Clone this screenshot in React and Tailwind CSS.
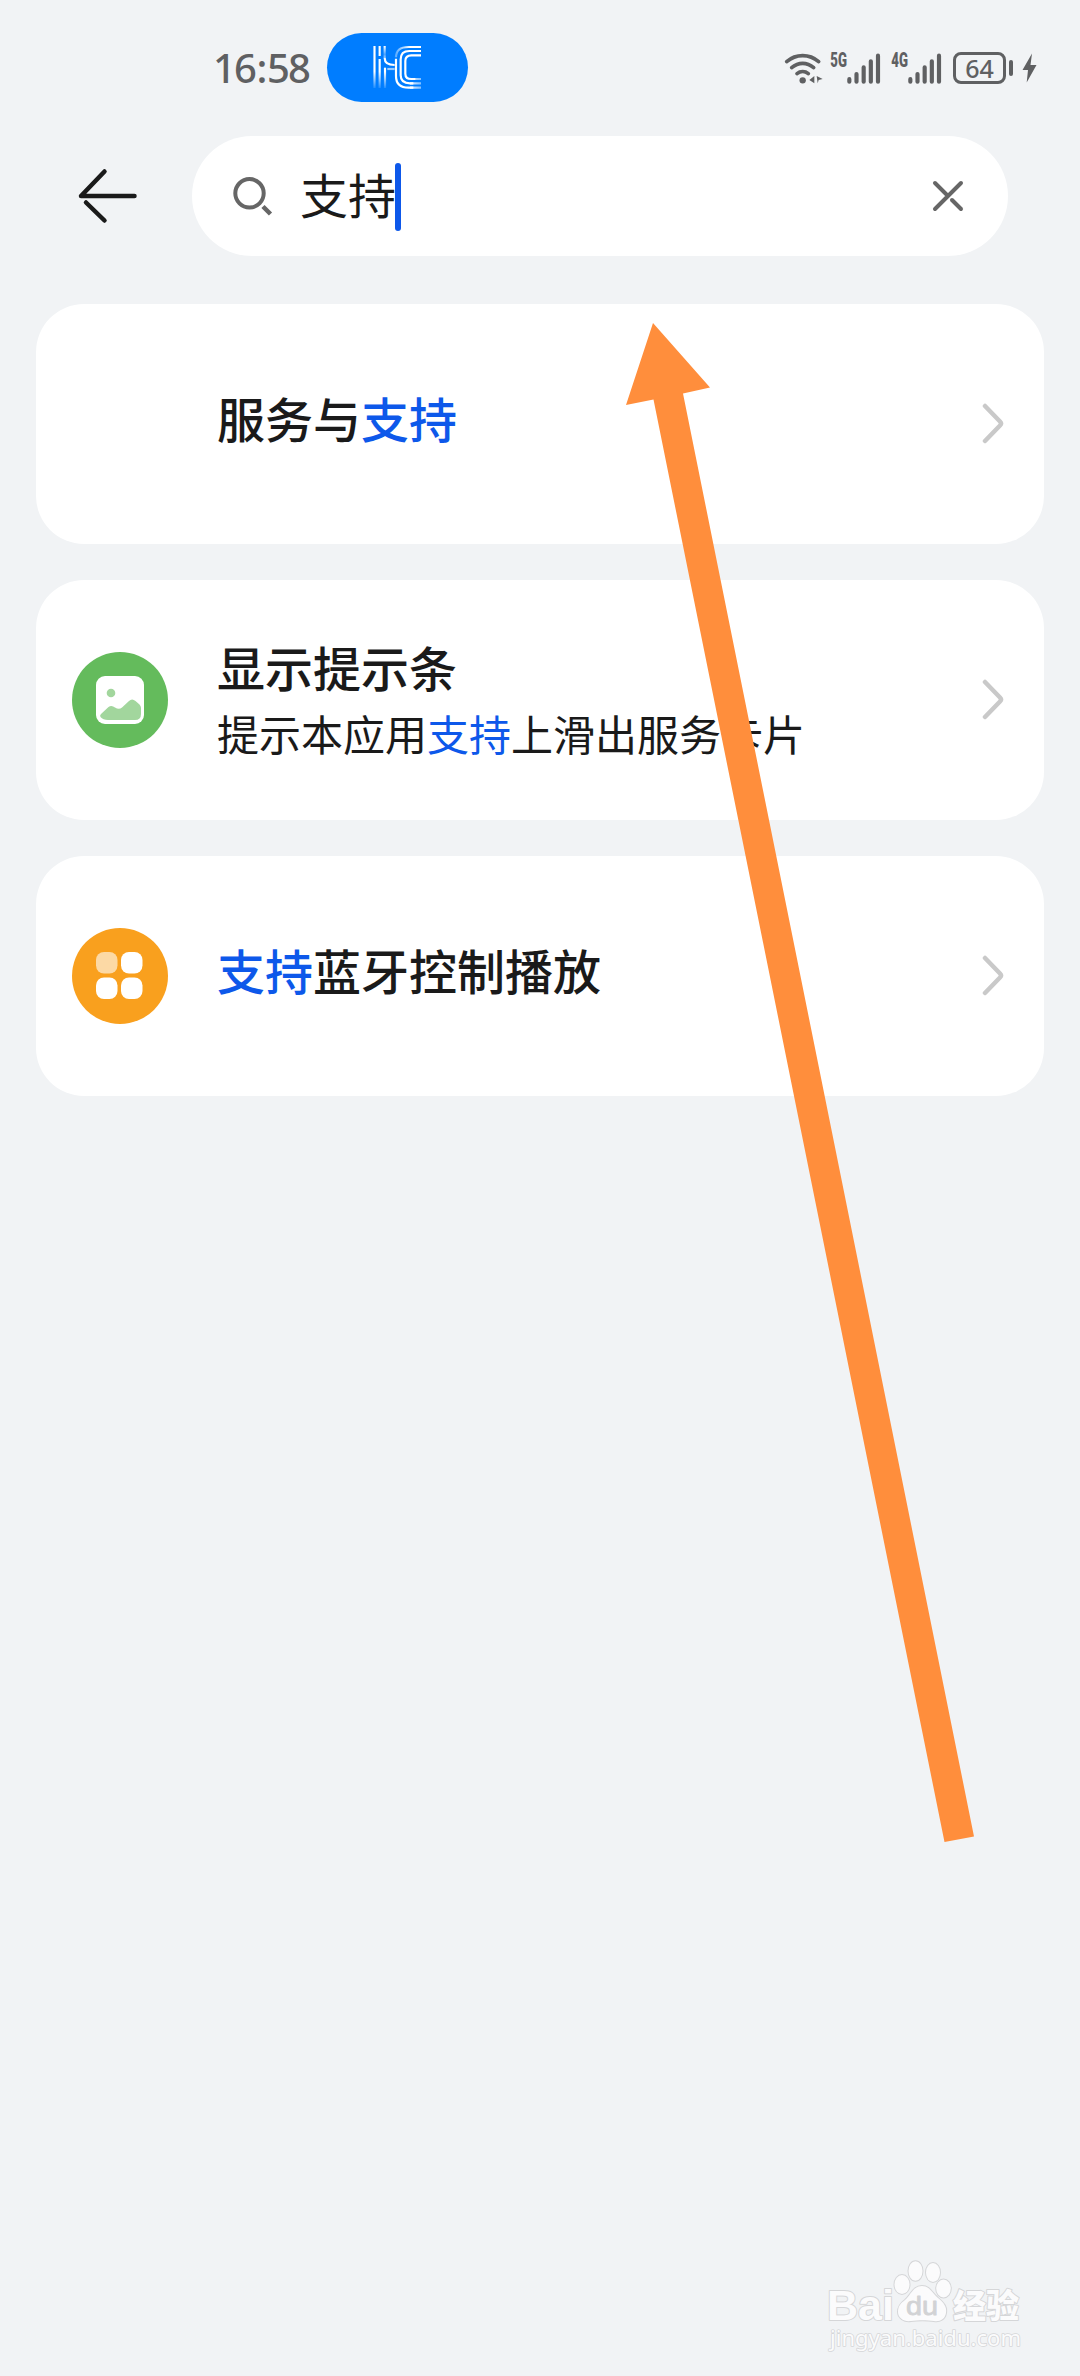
import React from 'react';

const results = [
  {
    id: 'service',
    icon: null,
    title: [{ text: '服务与' }, { text: '支持', match: true }],
  },
  {
    id: 'hint-bar',
    icon: 'picture',
    title: [{ text: '显示提示条' }],
    detail: [
      { text: '提示本应用' },
      { text: '支持', match: true },
      { text: '上滑出服务卡片' },
    ],
  },
  {
    id: 'bluetooth',
    icon: 'apps',
    title: [{ text: '支持', match: true }, { text: '蓝牙控制播放' }],
  },
];

const CastLogo = () => (
  <svg className="w-[76px] h-[64px]" viewBox="0 0 228 192" fill="none" strokeWidth="6.5">
    <defs>
      <linearGradient id="fadeDown" gradientUnits="userSpaceOnUse" x1="0" y1="30" x2="0" y2="158">
        <stop offset="0.6" stopColor="#fff" />
        <stop offset="1" stopColor="#fff" stopOpacity="0.1" />
      </linearGradient>
      <linearGradient id="fadeUp" gradientUnits="userSpaceOnUse" x1="0" y1="30" x2="0" y2="80">
        <stop offset="0" stopColor="#fff" />
        <stop offset="0.5" stopColor="#fff" stopOpacity="0.3" />
        <stop offset="1" stopColor="#fff" />
      </linearGradient>
      <linearGradient id="fadeLeft" gradientUnits="userSpaceOnUse" x1="106" y1="0" x2="150" y2="0">
        <stop offset="0" stopColor="#fff" stopOpacity="0.35" />
        <stop offset="1" stopColor="#fff" />
      </linearGradient>
      <linearGradient id="fadeRight" gradientUnits="userSpaceOnUse" x1="140" y1="0" x2="184" y2="0">
        <stop offset="0" stopColor="#fff" />
        <stop offset="1" stopColor="#fff" stopOpacity="0.5" />
      </linearGradient>
    </defs>
    <path d="M43.5 30V156" stroke="url(#fadeDown)" />
    <path d="M59 30V60M59 69V156" stroke="url(#fadeDown)" />
    <path d="M74 30V66" stroke="url(#fadeUp)" />
    <path d="M74 66C74 79 82 87 104 87" stroke="#fff" />
    <path d="M75 95V156" stroke="url(#fadeDown)" />
    <path d="M82 99H104" stroke="#fff" strokeOpacity="0.6" />
    <path d="M183 33H146C122 33 108 44 108 64" stroke="url(#fadeLeft)" />
    <path d="M183 45H148C130 45 122 54 122 70V118C122 134 132 142 150 142H160" stroke="#fff" />
    <path d="M183 58H154C142 58 136 64 136 75V113C136 124 142 129 154 129H166" stroke="#fff" />
    <path d="M108 68V120C108 144 122 155 146 155H160" stroke="#fff" />
    <path d="M160 129H183M150 142H183M150 155H183" stroke="url(#fadeRight)" />
  </svg>
);

const WifiIcon = () => (
  <svg className="w-[40px] h-[34px]" viewBox="0 0 120 102" fill="none" stroke="#5f6062" strokeWidth="11" strokeLinecap="round">
    <path d="M8 32C36 8 76 8 104 32" />
    <path d="M23 50C43 33 69 33 89 50" />
    <path d="M39 68C49 60 63 60 73 68" />
    <circle cx="56" cy="88" r="9.500" fill="#5f6062" stroke="none" />
    <path d="M91 75V97L76 87ZM98 75L116 84L104 87L101 97Z" fill="#5f6062" stroke="none" />
  </svg>
);

const Signal = ({ label }) => (
  <svg className="w-[54px] h-[34px] overflow-visible" viewBox="0 0 162 102">
    <text
      x="4"
      y="48"
      textLength="50"
      lengthAdjust="spacingAndGlyphs"
      fontSize="59"
      fontWeight="900"
      fill="#5f6062"
      fontFamily="Roboto, sans-serif"
    >
      {label}
    </text>
    <g stroke="#5f6062" strokeWidth="12.500" strokeLinecap="round">
      <path d="M61 84.500V92M82.500 69V92M104 49V92M125.500 31V92M147 14V92" />
    </g>
  </svg>
);

const Battery = () => (
  <div className="flex items-center">
    <div className="w-[53px] h-[32px] rounded-[8px] border-[3px] border-[#5f6062] flex items-center justify-center">
      <span className="text-[25px] leading-none font-medium font-['Noto_Sans',sans-serif] text-[#5f6062]">
        64
      </span>
    </div>
    <div className="w-[4px] h-[16px] rounded-full bg-[#5f6062] ml-[3px]" />
    <svg className="w-[15px] h-[30px] ml-[9px]" viewBox="0 0 15 30">
      <path d="M10 0.500L0.500 17H6L4.700 29.500L14.500 12H8.500Z" fill="#5f6062" />
    </svg>
  </div>
);

const StatusBar = () => (
  <div className="h-[136px] pl-[213px] flex items-start">
    <div className="w-[114px] h-[69px] mt-[33px] flex items-center">
      <span className="text-[40px] leading-none tracking-[-1.9px] font-medium font-['Noto_Sans',sans-serif] text-[#5f6062]">
        16<span className="mx-[1.500px]">:</span>58
      </span>
    </div>
    <div className="w-[141px] h-[69px] mt-[33px] rounded-full bg-[#007dff] flex items-center justify-center">
      <CastLogo />
    </div>
    <div className="ml-[316px] mt-[51px] flex items-center">
      <WifiIcon />
      <div className="ml-[5px]">
        <Signal label="5G" />
      </div>
      <div className="ml-[7px]">
        <Signal label="4G" />
      </div>
      <div className="ml-[9px]">
        <Battery />
      </div>
    </div>
  </div>
);

const SearchHeader = () => (
  <div className="flex items-center h-[120px]">
    <svg className="w-[64px] h-[60px] ml-[76px]" viewBox="0 0 64 60" fill="none" stroke="#1a1a1a" strokeWidth="4.500" strokeLinecap="round">
      <path d="M58.500 30H5L28.500 5.500" strokeLinejoin="round" />
      <path d="M28.500 54.500L10 36.500" />
    </svg>
    <div className="w-[816px] h-[120px] ml-[52px] rounded-full bg-white flex items-center">
      <svg className="w-[44px] h-[44px] ml-[40px]" viewBox="0 0 44 44" fill="none" stroke="#666" strokeWidth="4">
        <circle cx="17.500" cy="19.300" r="14.200" />
        <path d="M31 32.500L38.500 40" strokeWidth="4.500" />
      </svg>
      <span className="ml-[24px] pb-[7px] text-[48px] leading-none text-[#1a1a1a]">支持</span>
      <div className="w-[6px] h-[68px] ml-[-1px] mt-[2px] rounded-full bg-[#0d58ea]" />
      <svg className="w-[34px] h-[34px] ml-[530px]" viewBox="0 0 34 34" fill="none" stroke="#666" strokeWidth="4" strokeLinecap="round">
        <path d="M4 30L30 4M4 4L16 16" />
        <path d="M21 21L30 30" />
      </svg>
    </div>
  </div>
);

const RowIcon = ({ name }) => {
  if (name === 'picture') {
    return (
      <svg className="w-[96px] h-[96px]" viewBox="0 0 96 96">
        <circle cx="48" cy="48" r="48" fill="#64bb5c" />
        <rect x="24" y="24" width="48" height="48" rx="9" fill="#fff" />
        <circle cx="39" cy="41" r="4.300" fill="#a2d69d" />
        <path
          d="M29 62L36.500 55Q39.500 52.700 43 55.500Q47 58 50 55.500L57 49Q60 46 63.500 49L67.500 52.500Q69 54 69 56V62Q69 68 63 68H36Q31 68 28.500 65Q27.500 63.500 29 62Z"
          fill="#a2d69d"
        />
      </svg>
    );
  }
  if (name === 'apps') {
    return (
      <svg className="w-[96px] h-[96px]" viewBox="0 0 96 96">
        <circle cx="48" cy="48" r="48" fill="#f9a01e" />
        <rect x="24" y="24" width="21.500" height="21.500" rx="8" fill="#fcd9a5" />
        <rect x="49" y="24" width="21.500" height="21.500" rx="8" fill="#fff" />
        <rect x="24" y="49.500" width="21.500" height="21.500" rx="8" fill="#fff" />
        <rect x="49" y="49.500" width="21.500" height="21.500" rx="8" fill="#fff" />
      </svg>
    );
  }
  return <div className="w-[96px] h-[96px]" />;
};

const Highlighted = ({ parts }) =>
  parts.map((part) => (
    <span key={part.text} className={part.match ? 'text-[#0d58ea]' : ''}>
      {part.text}
    </span>
  ));

const ResultCard = ({ item }) => (
  <div className="h-[240px] rounded-[48px] bg-white flex items-center pl-[36px] pr-[38px]">
    <RowIcon name={item.icon} />
    <div className={`flex-1 ml-[49px] text-[#1a1a1a] whitespace-nowrap ${item.detail ? 'pb-[3px]' : 'pb-[14px]'}`}>
      <div className="text-[48px] leading-[68px] font-medium">
        <Highlighted parts={item.title} />
      </div>
      {item.detail && (
        <div className="text-[42px] leading-[66px]">
          <Highlighted parts={item.detail} />
        </div>
      )}
    </div>
    <svg className="w-[24px] h-[42px]" viewBox="0 0 24 42" fill="none" stroke="#c9c9c9" strokeWidth="4.500" strokeLinecap="round" strokeLinejoin="round">
      <path d="M3 3L18 18.500Q20 20.500 18 22.500L3 38" />
    </svg>
  </div>
);

const Pointer = () => (
  <svg className="absolute left-[620px] top-[316px] w-[370px] h-[1534px]" viewBox="620 316 370 1534">
    <path d="M653 323L710 387.500L683 393.500L974 1836.500L944.500 1842L653.500 399.500L626 405Z" fill="#ff8e3c" />
  </svg>
);

const Watermark = () => (
  <svg
    className="absolute left-[800px] top-[2240px] w-[260px] h-[136px]"
    viewBox="0 0 260 136"
    fill="#fbfbfc"
    stroke="#d5d6d8"
    strokeWidth="2"
    paintOrder="stroke"
    strokeLinejoin="round"
  >
    <text x="27" y="80" fontSize="43" fontWeight="700" textLength="67" lengthAdjust="spacingAndGlyphs" fontFamily="Liberation Sans, sans-serif">
      Bai
    </text>
    <ellipse cx="102" cy="44.500" rx="7.500" ry="9.500" />
    <ellipse cx="115.500" cy="31" rx="7" ry="9.800" />
    <ellipse cx="133" cy="32.500" rx="7" ry="9.500" />
    <ellipse cx="143.500" cy="48.500" rx="7.300" ry="9" />
    <path d="M122 46C130 46 132 53 138 58C144 63 147 67 146 73C145 79 140 82 134 81C127 80 118 80 111 81C104 82 98 78 98 72C98 66 101 63 105 60C111 55 113 46 122 46Z" />
    <text x="106" y="75" fontSize="26" textLength="32" lengthAdjust="spacingAndGlyphs" fill="#d2d3d5" stroke="#d2d3d5" strokeWidth="0.8" fontFamily="Liberation Sans, sans-serif">
      du
    </text>
    <text x="153" y="77.500" fontSize="33" fontWeight="900" textLength="66" fontFamily="Noto Sans CJK SC, sans-serif">
      经验
    </text>
    <text x="30" y="106" fontSize="22" textLength="191" lengthAdjust="spacingAndGlyphs" strokeWidth="1.6" fontFamily="Noto Sans, sans-serif">
      jingyan.baidu.com
    </text>
  </svg>
);

const App = () => {
  return (
    <div className="relative w-[1080px] h-[2376px] overflow-hidden bg-[#f1f3f5] font-['Noto_Sans_CJK_SC',sans-serif]">
      <StatusBar />
      <SearchHeader />
      <div className="mt-[48px] px-[36px] flex flex-col gap-[36px]">
        {results.map((item) => (
          <ResultCard key={item.id} item={item} />
        ))}
      </div>
      <Pointer />
      <Watermark />
    </div>
  );
};

export default App;
